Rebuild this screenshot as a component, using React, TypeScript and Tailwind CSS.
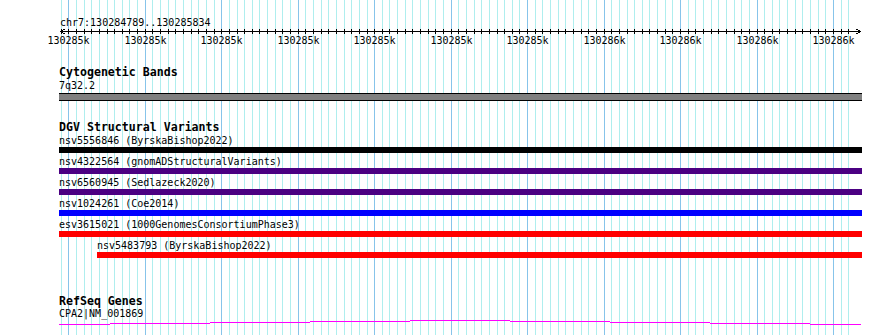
import React from 'react';

// view: chr7:130284789..130285834, drawn 803px wide starting at x=59
const LEFT = 59;
const FIRST_LINE = 60.65;
const STEP = 7.647;

const gridLines = Array.from({ length: 104 }, (_, i) => ({
  x: Math.round(FIRST_LINE + i * STEP),
  major: i % 10 === 1,
}));

const majorLabels = gridLines
  .filter((g) => g.major)
  .map((g, i) => ({ x: g.x - LEFT, text: i < 7 ? '130285k' : '130286k' }));

interface Variant {
  name: string;
  source: string;
  color: string;
  offset?: number;
}

const variants: Variant[] = [
  { name: 'nsv5556846', source: 'ByrskaBishop2022', color: 'bg-black' },
  { name: 'nsv4322564', source: 'gnomADStructuralVariants', color: 'bg-[#4b0082]' },
  { name: 'nsv6560945', source: 'Sedlazeck2020', color: 'bg-[#4b0082]' },
  { name: 'nsv1024261', source: 'Coe2014', color: 'bg-[#0000ff]' },
  { name: 'esv3615021', source: '1000GenomesConsortiumPhase3', color: 'bg-[#ff0000]' },
  { name: 'nsv5483793', source: 'ByrskaBishop2022', color: 'bg-[#ff0000]', offset: 38 },
];

// intron line of CPA2, stepped like the original raster
const intronSteps: [number, number, number][] = [
  [0, 51, 4.5],
  [51, 151, 3.5],
  [151, 251, 2.5],
  [251, 351, 1.5],
  [351, 451, 0.5],
  [451, 551, 1.5],
  [551, 651, 2.5],
  [651, 751, 3.5],
  [751, 802, 4.5],
];

const TrackTitle: React.FC<{ children: React.ReactNode; h: string }> = ({ children, h }) => (
  <div className={`${h} font-bold text-[11.6px] leading-[15px] whitespace-nowrap text-black`}>{children}</div>
);

const FeatureLabel: React.FC<{ children: React.ReactNode }> = ({ children }) => (
  <div className="h-[12px] text-[10px] leading-[12px] whitespace-pre text-black">{children}</div>
);

const Ruler = () => (
  <div className="relative h-[65px]">
    <div className="pt-[16px] pl-[1px] h-[29px] text-[10px] leading-[13px] text-black">chr7:130284789..130285834</div>
    <svg className="absolute left-0 top-[28px]" width={805} height={8} shapeRendering="crispEdges">
      <line x1={1} y1={3.5} x2={802} y2={3.5} stroke="#000" strokeWidth={1} />
      {gridLines.map((g, i) => (
        <line key={i} x1={g.x - LEFT + 0.5} y1={1} x2={g.x - LEFT + 0.5} y2={6} stroke="#000" strokeWidth={1} />
      ))}
      <polyline points="5.5,1 1.5,3.5 5.5,6" fill="none" stroke="#000" strokeWidth={1} />
      <polyline points="797.5,1 801.5,3.5 797.5,6" fill="none" stroke="#000" strokeWidth={1} />
    </svg>
    {majorLabels.map((l, i) => (
      <span
        key={i}
        className="absolute top-[34px] -translate-x-1/2 text-[10px] leading-[13px] text-black"
        style={{ left: l.x + 0.5 }}
      >
        {l.text}
      </span>
    ))}
  </div>
);

export default function App() {
  return (
    <div className="relative w-[890px] h-[335px] bg-white overflow-hidden font-['DejaVu_Sans_Mono',monospace]">
      <svg className="absolute inset-0" width={890} height={335} shapeRendering="crispEdges">
        {gridLines.map((g, i) => (
          <rect key={i} x={g.x} y={0} width={1} height={335} fill={g.major ? '#87c4ea' : '#afeeee'} />
        ))}
      </svg>

      <div className="relative ml-[59px] w-[803px]">
        <Ruler />

        {/* Cytogenetic Bands */}
        <TrackTitle h="h-[15px]">Cytogenetic Bands</TrackTitle>
        <FeatureLabel>7q32.2</FeatureLabel>
        <div className="mt-[1px] h-[8px] border-y border-black bg-[#808080]" />

        {/* DGV Structural Variants */}
        <div className="mt-[19px] flex flex-col">
          <TrackTitle h="h-[15px]">DGV Structural Variants</TrackTitle>
          {variants.map((v) => (
            <div key={v.name} className="mb-[3px]" style={{ marginLeft: v.offset ?? 0 }}>
              <FeatureLabel>{`${v.name} (${v.source})`}</FeatureLabel>
              <div className={`h-[6px] ${v.color}`} />
            </div>
          ))}
        </div>

        {/* RefSeq Genes */}
        <div className="mt-[33px]">
          <div className="h-[14px] font-bold text-[11.6px] leading-[14px] whitespace-nowrap text-black">RefSeq Genes</div>
          <FeatureLabel>CPA2|NM_001869</FeatureLabel>
          <svg className="block" width={803} height={6} shapeRendering="crispEdges">
            {intronSteps.map(([a, b, y], i) => (
              <line key={i} x1={a} y1={y} x2={b} y2={y} stroke="#ff00ff" strokeWidth={1} />
            ))}
          </svg>
        </div>
      </div>
    </div>
  );
}
